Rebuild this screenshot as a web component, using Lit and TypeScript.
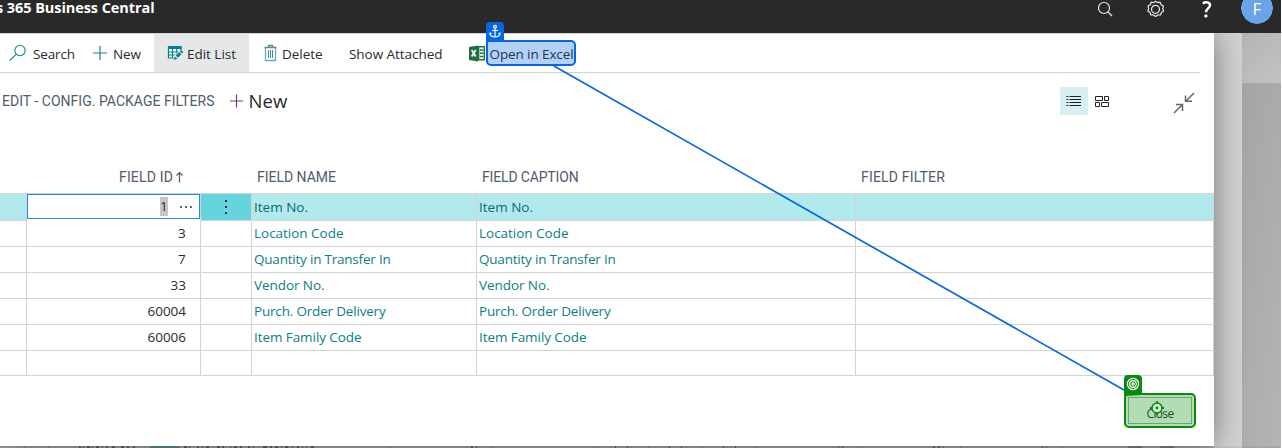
import { LitElement, html, css, svg } from "lit";
import { customElement, property } from "lit/decorators.js";

// Text label whose tracking is spread so that it fills a given measure.
@customElement("fit-text")
class FitText extends LitElement {
  @property() text = "";
  @property({ type: Number }) w = 0;
  static styles = css`
    :host { display: inline-block; white-space: pre; flex: none; }
  `;
  render() {
    return html`<span>${this.text}</span>`;
  }
  firstUpdated() {
    const span = this.renderRoot.querySelector("span") as HTMLElement;
    const natural = span.getBoundingClientRect().width;
    if (this.w) span.style.letterSpacing = `${(this.w - natural) / this.text.length}px`;
  }
}

const t = (text: string, w: number) => html`<fit-text .text=${text} .w=${w}></fit-text>`;

interface Row { id: string; idW: number; name: string; w: number; }
const ROWS: Row[] = [
  { id: "1", idW: 7, name: "Item No.", w: 54 },
  { id: "3", idW: 8, name: "Location Code", w: 89.5 },
  { id: "7", idW: 8, name: "Quantity in Transfer In", w: 136.5 },
  { id: "33", idW: 15.5, name: "Vendor No.", w: 70.5 },
  { id: "60004", idW: 38.5, name: "Purch. Order Delivery", w: 131.5 },
  { id: "60006", idW: 38.5, name: "Item Family Code", w: 107.5 },
  { id: "", idW: 0, name: "", w: 0 },
];

@customElement("app-root")
class AppRoot extends LitElement {
  static styles = css`
    :host { display: block; width: 1282px; height: 448px; background: #fff; overflow: hidden; font-family: "Open Sans", "Noto Sans", sans-serif; font-size: 13.5px; color: #2b2b2b; }
    * { box-sizing: border-box; }
    svg { display: block; flex: none; }
    .screen { position: relative; display: flex; flex-direction: column; width: 1281px; height: 448px; overflow: hidden; background: #a6a6a6; }
    .top { display: flex; height: 33px; background: #292929; color: #fff; position: relative; z-index: 2; flex: none; }
    .brand { flex: 1; font-weight: 700; font-size: 14.5px; line-height: 16px; display: flex; margin-left: -4px; }
    .tools { display: flex; width: 184px; }
    .avatar { width: 32px; height: 24px; margin-left: -40px; margin-right: 8px; flex: none; background: radial-gradient(circle 16px at 16px 8px, #6aa3e8 15.5px, transparent 16px); font-size: 17px; line-height: 18px; text-align: center; }
    .main { display: flex; flex: none; height: 413px; }
    .dialog { width: 1214px; background: #fff; box-shadow: 0 0 30px rgba(0,0,0,.45); position: relative; z-index: 1; flex: none; }
    .gutter { width: 28px; background: #d3d3d3; flex: none; }
    .side { flex: 1; background: linear-gradient(100deg, #a3a5a4, #b3b5b4); }
    .side div { height: 50px; background: linear-gradient(140deg, #b5b5b5, #c2c2c2); }
    .bar { display: flex; align-items: center; width: 1200px; height: 40px; border-top: 1px solid #d2d3d6; border-bottom: 1px solid #d2d3d6; padding-left: 9px; line-height: 20px; }
    .bar fit-text { margin-top: 2px; }
    .item { display: flex; align-items: center; height: 38px; }
    .on { background: #e5e7e9; width: 95px; padding-left: 13px; margin-left: 13px; }
    .title { display: flex; align-items: center; height: 56px; padding-left: 2px; }
    .caps { font-family: Roboto, sans-serif; font-size: 14px; color: #505c6d; line-height: 20px; }
    .title .caps { margin-top: -1px; }
    .big { font-size: 18.5px; line-height: 28px; margin-left: 5px; }
    .views { display: flex; margin-left: auto; align-items: center; width: 154px; }
    .listview { width: 28px; height: 28px; background: #d9f0f2; display: grid; place-items: center; }
    .heads, .row { display: grid; grid-template-columns: 27px 174px 51px 225px 379px 358px; }
    .heads { height: 64px; align-items: end; padding-bottom: 6px; }
    .heads > div { padding-left: 5px; display: flex; }
    .heads .idh { justify-content: flex-end; padding-right: 17px; align-items: center; }
    .grid { width: 1214px; border-top: 1px solid #d2d3d6; }
    .row { height: 26px; line-height: 25px; }
    .row > div { border-right: 1px solid #d2d3d6; border-bottom: 1px solid #d2d3d6; padding-left: 2px; color: #0b8084; display: flex; padding-top: 1px; }
    .row .id { color: #2b2b2b; justify-content: flex-end; padding-right: 14px; }
    .sel > div { background: #b1e9ec; }
    .sel > div:nth-child(n + 4) { color: #0d6a70; }
    .sel .id { background: #fff; border: 1px solid #2b88d8; margin-right: 1px; box-shadow: 1px 0 #d2d3d6; height: 25px; padding: 0 6px 0 0; align-items: center; }
    .sel .dots { background: #66d4de; padding: 0; align-items: center; justify-content: center; }
    .mark { background: #c6c6c6; width: 8px; height: 19px; line-height: 19px; display: flex; margin-right: 11px; }
    .below { display: flex; height: 2px; position: relative; flex: none; background: #a6a6a6; z-index: 0; }
    .close { position: absolute; left: 1124px; top: 393px; width: 72px; height: 35px; border: 2px solid #088a0d; border-radius: 5px; background: #b3dcb4; z-index: 3; padding: 2px; font-size: 12px; color: #26482b; }
    .close > div { border: 1px solid #74a277; height: 27px; line-height: 31px; text-align: center; }
    .opener { position: absolute; left: 486px; top: 40px; width: 90px; height: 26px; border: 2px solid #0568e0; border-radius: 5px; border-top-left-radius: 0; background: #b3d1f5; z-index: 3; padding-left: 1.5px; line-height: 25px; color: #1d3551; display: flex; }
    .over { position: absolute; left: 0; top: 0; z-index: 4; }
  `;

  plus(c: string, size = 16) {
    return html`<svg width=${size} height="16" viewBox="0 0 16 16"><path d="M8 1v14M1 8h14" stroke=${c} stroke-width="1.2" fill="none"/></svg>`;
  }

  render() {
    const hatch = [[24, 1], [48, 1], [390, 1], [492, 1], [594, 1], [648, 1], [702, 1], [756, 1], [858, 1], [960, 1], [1062, 1]];
    const bits = [[79, 2], [83, 1], [87, 3], [92, 1], [96, 3], [102, 1], [106, 2], [112, 3], [121, 3], [127, 2], [133, 2],
      [184, 3], [189, 1], [197, 2], [202, 1], [206, 3], [217, 3], [222, 2], [230, 1], [234, 3], [240, 2], [248, 2], [253, 1], [263, 4], [270, 2], [275, 3], [281, 1], [285, 3], [292, 1], [297, 2], [302, 1], [306, 1], [311, 3],
      [471, 2], [476, 1], [615, 1], [627, 1], [669, 1], [681, 1], [723, 1], [735, 1], [838, 1], [842, 1], [933, 2], [938, 2], [943, 1], [1042, 1], [1046, 1]];
    return html`
    <div class="screen">
      <div class="top">
        <div class="brand">${t("s 365 Business Central", 158.5)}</div>
        <div class="tools">
          <svg width="157" height="33" viewBox="1097 0 157 33" fill="none" stroke="#e8e8e8" stroke-width="1.2">
            <circle cx="1104" cy="8" r="5.5"/><path d="M1108 12l4 4"/>
            <circle cx="1155.500" cy="9.300" r="4"/>
            <path d="M1155.500 1.200l2.100 1.400 2.500-.4 1 2.500 2.300 1.400-.7 2.400.9 2.500-2.200 1.500-.9 2.500-2.600-.1-2.200 1.600-2.200-1.600-2.600.1-.9-2.500-2.200-1.500.9-2.500-.7-2.400 2.300-1.400 1-2.500 2.500.4z" stroke-linejoin="round"/>
            <path d="M1202.800 3.500c2.600-2 7.200-1.600 7.200 1.700 0 3.200-4 3.300-4 7" stroke="#fff" stroke-width="2.500"/><circle cx="1205.900" cy="15.900" r="1.700" fill="#fff" stroke="none"/>
          </svg>
        </div>
        <div class="avatar">F</div>
      </div>
      <div class="main">
        <div class="dialog">
          <div class="bar">
            <div class="item">
              <svg width="24" height="18" viewBox="9 45 24 18" fill="none" stroke="#17868b" stroke-width="1.100"><circle cx="20" cy="51.500" r="5.200"/><path d="M16.300 55.300L9.500 61.500"/></svg>
              ${t("Search", 42)}
            </div>
            <div class="item" style="margin-left:17px">${this.plus("#17868b")}<span style="width:5px"></span>${t("New", 28)}</div>
            <div class="item on">
              <svg width="20" height="16" viewBox="0 0 20 16"><path d="M1 1h13v12H1z" fill="#fff"/><path d="M1 1h13.500v3H1z" fill="#008489"/><path d="M1.500 1v12.500M14 1v4M1 7h12M1 10h10M1 13h6M5.500 3v10M9.700 3v8" stroke="#008489" stroke-width="1.200" fill="none"/><path d="M6 15.500l1.200-4.800 5.500-6 3.800 3-6 6.500z" fill="#e5e7e9"/><path d="M6.800 15l1.100-3.600 2.500 2.300zM8.700 10.600l3.300-3.600 2.300 2.200-3.200 3.600zM12.700 6.200l1.200-1.300 2.300 2.100-1.200 1.400z" fill="#008489"/></svg>
              ${t("Edit List", 49)}
            </div>
            <div class="item" style="margin-left:15px">
              <svg width="18" height="18" viewBox="0 0 18 18" fill="none"><path d="M1.500 4v12.500h10V4" stroke="#6ea9b4" stroke-width="1.300"/><path d="M.500 3.500h12M4.500 3V1.500h4V3" stroke="#5b8793" stroke-width="1.300"/><path d="M4.500 6v8M6.500 6v8M8.500 6v8" stroke="#3b8f9b"/></svg>
              ${t("Delete", 40.5)}
            </div>
            <div class="item" style="margin-left:26.500px">${t("Show Attached", 93.5)}</div>
            <div class="item" style="margin-left:26.500px">
              <svg width="17" height="17" viewBox="0 0 17 17"><path d="M9.700 1.700h5.600v13H9.700z" fill="#fff" stroke="#1e7145" stroke-width="1.400"/><path d="M11 5h3.500M11 8.200h3.500M11 11.400h3.500" stroke="#1e7145" stroke-width="1.500"/><path d="M0 2l9-1.500v16L0 15z" fill="#1e7145"/><path d="M2.700 5l4 6.500M6.700 5l-4 6.500" stroke="#fff" stroke-width="1.700"/></svg>
            </div>
          </div>
          <div class="title">
            <span class="caps">${t("EDIT - CONFIG. PACKAGE FILTERS", 212.500)}</span>
            <span style="width:14px"></span>${this.plus("#6d3b78", 15)}
            <span class="big">${t("New", 39)}</span>
            <div class="views">
              <div class="listview"><svg width="16" height="12" viewBox="0 0 16 12"><path d="M3.500 1.500H15M3.500 4.500H15M3.500 7.500H15M3.500 10.500H15M.5 1.500h2M.5 4.500h2M.5 7.500h2M.5 10.500h2" stroke="#222" stroke-width="1"/></svg></div>
              <svg width="18" height="14" viewBox="0 0 18 14" style="margin-left:6px;margin-top:2px" fill="none" stroke="#222"><path d="M1.500 1.500h7v4h-7zM10.500 1.500h4v4h-4zM1.500 7.500h4v4h-4zM7.500 7.500h7v4h-7z"/></svg>
              <svg width="22" height="22" viewBox="0 0 22 22" style="margin-left:61px;margin-top:4px" fill="none" stroke="#666" stroke-width="1.500"><path d="M21 1l-8 8M12.500 3.500V9.300H19M1 21l8-8M3 12.500h6.500v6.500"/></svg>
            </div>
          </div>
          <div class="heads caps">
            <div></div>
            <div class="idh">${t("FIELD ID", 54)}<svg width="9" height="12" viewBox="0 0 9 12" style="margin-left:2px"><path d="M4.500 11.500V1.500M1.500 4.500l3-3 3 3" stroke="#505c6d" stroke-width="1.200" fill="none"/></svg></div>
            <div></div>
            <div>${t("FIELD NAME", 79)}</div>
            <div>${t("FIELD CAPTION", 96.500)}</div>
            <div>${t("FIELD FILTER", 84)}</div>
          </div>
          <div class="grid">
            ${ROWS.map((r, i) => html`<div class="row ${i === 0 ? "sel" : ""}">
              <div></div>
              <div class="id">${i === 0
                ? html`<span class="mark">${t("1", 8)}</span><svg width="14" height="4" viewBox="0 0 14 4"><path d="M1 2h2M6 2h2M11 2h2" stroke="#333" stroke-width="1.500"/></svg>`
                : r.id ? t(r.id, r.idW) : ""}</div>
              <div class="dots">${i === 0 ? html`<svg width="4" height="16" viewBox="0 0 4 16"><path d="M2 1v2M2 7v2M2 13v2" stroke="#333" stroke-width="2"/></svg>` : ""}</div>
              <div>${r.name ? t(r.name, r.w) : ""}</div>
              <div>${r.name ? t(r.name, r.w) : ""}</div>
              <div></div>
            </div>`)}
          </div>
        </div>
        <div class="gutter"></div>
        <div class="side"><div></div></div>
      </div>
      <div class="below">
        <svg width="1281" height="2" viewBox="0 0 1281 2">
          <path d="M150 0h30v2h-30z" fill="#5e9496"/>
          ${hatch.map(([x, w]) => svg`<rect x=${x} y="0" width=${w} height="2" fill="#8e8e8e"/>`)}
          ${bits.map(([x, w]) => svg`<rect x=${x} y="0" width=${w} height="2" fill=${x > 830 ? "#4f7d7f" : "#666"}/>`)}
          <path d="M1128 0h14v2h-14zM1160 0h14v2h-14z" fill="#808080"/>
          <path d="M1214 0h28v2h-28z" fill="#c6c6c6"/>
        </svg>
      </div>
      <div class="opener">${t("Open in Excel", 84)}</div>
      <div class="close"><div>${t("Close", 27)}</div></div>
      <svg class="over" width="1281" height="448" viewBox="0 0 1281 448" fill="none">
        <path d="M554 66L1124 390" stroke="#0568e0" stroke-width="1.700"/>
        <path d="M486 42V26a4 4 0 0 1 4-4h10a4 4 0 0 1 4 4v16z" fill="#0568e0"/>
        <g stroke="#fff" stroke-width="1.200"><circle cx="495" cy="26.800" r="1.400"/><path d="M495 28.500V37M492 30.500h6M490 33.300c.2 2.500 2 3.700 5 3.700s4.800-1.200 5-3.700M489.600 34.500l.5-1.500 1.500.8M500.400 34.500l-.5-1.500-1.500.8"/></g>
        <path d="M1124 396v-17a4 4 0 0 1 4-4h10a4 4 0 0 1 4 4v16z" fill="#088a0d"/>
        <g stroke="#fff" stroke-width="1.200"><circle cx="1133" cy="384" r="5.600"/><circle cx="1133" cy="384" r="3.300"/><circle cx="1133" cy="384" r="1.200"/></g>
        <circle cx="1157" cy="408" r="5" fill="#d5f0d5" stroke="#088a0d" stroke-width="1.500"/><circle cx="1157" cy="408" r="1.400" fill="#088a0d"/><path d="M1157 401v2.500M1157 412.500v2.500M1150 408h2.500M1161.500 408h2.500" stroke="#088a0d" stroke-width="1.800"/>
      </svg>
    </div>`;
  }
}
